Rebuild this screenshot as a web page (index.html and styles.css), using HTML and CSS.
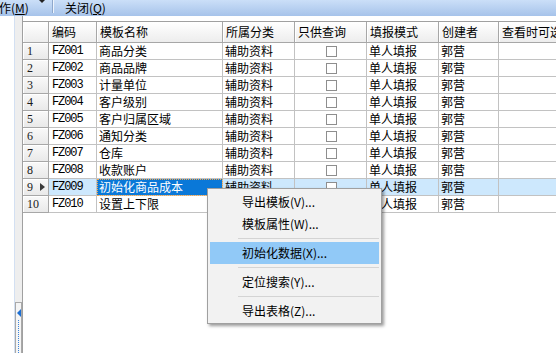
FILE: index.html
```html
<!DOCTYPE html>
<html lang="zh-CN">
<head>
<meta charset="utf-8">
<title>模板列表</title>
<link rel="stylesheet" href="styles.css">
</head>
<body>
<div class="screen">
  <div class="toolbar">
    <span class="tb-item tb-first">作(<u>M</u>)</span>
    <span class="tb-arrow"></span>
    <span class="tb-sep"></span>
    <span class="tb-item tb-second">关闭(<u>Q</u>)</span>
  </div>
  <div class="main">
    <div class="leftstrip">
      <div class="strip-white"></div>
      <div class="strip-bar">
        <div class="collapse-btn">
          <span class="cb-arrow"></span>
          <span class="cb-dots"></span>
        </div>
      </div>
    </div>
    <div class="gridpanel">
      <div class="grid">
        <div class="row">
          <div class="hc corner"></div>
          <div class="hc">编码</div>
          <div class="hc">模板名称</div>
          <div class="hc">所属分类</div>
          <div class="hc">只供查询</div>
          <div class="hc">填报模式</div>
          <div class="hc">创建者</div>
          <div class="hc">查看时可选</div>
        </div>
        <div class="row">
          <div class="rh"><span>1</span></div>
          <div class="c code">FZ001</div><div class="c">商品分类</div><div class="c">辅助资料</div>
          <div class="c ck"><span class="box"></span></div><div class="c">单人填报</div><div class="c">郭营</div><div class="c"></div>
        </div>
        <div class="row">
          <div class="rh"><span>2</span></div>
          <div class="c code">FZ002</div><div class="c">商品品牌</div><div class="c">辅助资料</div>
          <div class="c ck"><span class="box"></span></div><div class="c">单人填报</div><div class="c">郭营</div><div class="c"></div>
        </div>
        <div class="row">
          <div class="rh"><span>3</span></div>
          <div class="c code">FZ003</div><div class="c">计量单位</div><div class="c">辅助资料</div>
          <div class="c ck"><span class="box"></span></div><div class="c">单人填报</div><div class="c">郭营</div><div class="c"></div>
        </div>
        <div class="row">
          <div class="rh"><span>4</span></div>
          <div class="c code">FZ004</div><div class="c">客户级别</div><div class="c">辅助资料</div>
          <div class="c ck"><span class="box"></span></div><div class="c">单人填报</div><div class="c">郭营</div><div class="c"></div>
        </div>
        <div class="row">
          <div class="rh"><span>5</span></div>
          <div class="c code">FZ005</div><div class="c">客户归属区域</div><div class="c">辅助资料</div>
          <div class="c ck"><span class="box"></span></div><div class="c">单人填报</div><div class="c">郭营</div><div class="c"></div>
        </div>
        <div class="row">
          <div class="rh"><span>6</span></div>
          <div class="c code">FZ006</div><div class="c">通知分类</div><div class="c">辅助资料</div>
          <div class="c ck"><span class="box"></span></div><div class="c">单人填报</div><div class="c">郭营</div><div class="c"></div>
        </div>
        <div class="row">
          <div class="rh"><span>7</span></div>
          <div class="c code">FZ007</div><div class="c">仓库</div><div class="c">辅助资料</div>
          <div class="c ck"><span class="box"></span></div><div class="c">单人填报</div><div class="c">郭营</div><div class="c"></div>
        </div>
        <div class="row">
          <div class="rh"><span>8</span></div>
          <div class="c code">FZ008</div><div class="c">收款账户</div><div class="c">辅助资料</div>
          <div class="c ck"><span class="box"></span></div><div class="c">单人填报</div><div class="c">郭营</div><div class="c"></div>
        </div>
        <div class="row sel">
          <div class="rh"><span>9</span><span class="rh-arrow"></span></div>
          <div class="c code">FZ009</div><div class="c focus">初始化商品成本</div><div class="c">辅助资料</div>
          <div class="c ck"><span class="box"></span></div><div class="c">单人填报</div><div class="c">郭营</div><div class="c"></div>
        </div>
        <div class="row">
          <div class="rh"><span>10</span></div>
          <div class="c code">FZ010</div><div class="c">设置上下限</div><div class="c">辅助资料</div>
          <div class="c ck"><span class="box"></span></div><div class="c">单人填报</div><div class="c">郭营</div><div class="c"></div>
        </div>
      </div>
    </div>
  </div>
  <div class="menu">
    <div class="mi">导出模板(V)...</div>
    <div class="mi">模板属性(W)...</div>
    <div class="msep"></div>
    <div class="mi hl">初始化数据(X)...</div>
    <div class="msep"></div>
    <div class="mi">定位搜索(Y)...</div>
    <div class="msep"></div>
    <div class="mi">导出表格(Z)...</div>
  </div>
</div>
</body>
</html>
```

FILE: styles.css
```css
* { box-sizing: border-box; margin: 0; padding: 0; }
body {
  margin: 0;
  width: 556px;
  height: 353px;
  overflow: hidden;
  background: #fff;
  font: 12px "Noto Sans CJK SC", sans-serif;
  color: #000;
}
.screen { position: relative; width: 556px; height: 353px; overflow: hidden; }

/* toolbar */
.toolbar {
  height: 16px;
  background: linear-gradient(#cbdff8, #a6c3ea);
  display: flex;
  align-items: center;
}
.tb-item { line-height: 16px; white-space: nowrap; }
.tb-item u { text-decoration: underline; text-underline-offset: 1px; }
.tb-first { margin-left: -1px; }
.tb-arrow {
  align-self: flex-start;
  width: 0; height: 0;
  border-left: 3px solid transparent;
  border-right: 3px solid transparent;
  border-top: 3px solid #222;
  margin-left: 10px;
}
.tb-sep {
  align-self: flex-start;
  width: 2px;
  height: 13px;
  border-left: 1px solid #8ea8cc;
  border-right: 1px solid #eef4fc;
  margin-left: 7px;
}
.tb-second { margin-left: 11px; }

/* main area */
.main { display: flex; height: 337px; }
.leftstrip { width: 22px; display: flex; flex: none; }
.strip-white { width: 14px; background: #fff; }
.strip-bar {
  width: 8px;
  border-left: 1px solid #d3e0f2;
  background: #eeeeee;
  display: flex;
  flex-direction: column;
}
.collapse-btn {
  margin-top: auto;
  height: 51px;
  border: 1px solid #a9a9a9;
  border-bottom: none;
  background: #f5f5f5;
  display: flex;
  flex-direction: column;
  align-items: center;
  padding-top: 6px;
}
.cb-arrow {
  width: 0; height: 0;
  border-right: 4px solid #1d6fd3;
  border-top: 4px solid transparent;
  border-bottom: 4px solid transparent;
}
.cb-dots {
  margin-top: 3px;
  flex: 1;
  width: 0;
  border-left: 1px dotted #3b84dc;
}

.gridpanel {
  flex: 1;
  min-width: 0;
  border-left: 1px solid #a0a0a0;
  padding-top: 5px;
  overflow: hidden;
  background: #fff;
}
.grid {
  display: grid;
  grid-template-columns: 26px 48px 126px 72px 72px 72px 60px 80px;
  grid-template-rows: 21px repeat(10, 17px);
  border-top: 1px solid #a0a0a0;
  width: 556px;
}
.row { display: contents; }

.hc {
  background: linear-gradient(#ffffff, #ededed);
  border-right: 1px solid #a7a7a7;
  border-bottom: 1px solid #a7a7a7;
  box-shadow: inset 1px 0 #ffffff;
  padding-left: 3px;
  line-height: 20px;
  white-space: nowrap;
  overflow: hidden;
}
.rh {
  background: linear-gradient(#f9f9f9, #e9e9e9);
  border-right: 1px solid #a7a7a7;
  border-bottom: 1px solid #a7a7a7;
  box-shadow: inset 1px 1px #ffffff;
  font-family: "Liberation Serif", serif;
  font-size: 12px;
  color: #1a1a1a;
  padding-left: 4px;
  line-height: 16px;
  display: flex;
  justify-content: space-between;
  align-items: center;
}
.rh-arrow {
  width: 0; height: 0;
  border-left: 5px solid #3a3a3a;
  border-top: 4px solid transparent;
  border-bottom: 4px solid transparent;
  margin-right: 3px;
}
.c {
  border-right: 1px solid #c2c2c2;
  border-bottom: 1px solid #c2c2c2;
  padding-left: 2px;
  line-height: 16px;
  white-space: nowrap;
  overflow: hidden;
}
.code {
  font-family: "Liberation Mono", monospace;
  font-size: 12px;
  letter-spacing: -1.1px;
  padding-left: 3px;
}
.ck { display: flex; align-items: center; justify-content: center; padding-left: 1px; }
.box {
  width: 11px;
  height: 11px;
  border: 1px solid #8e8e8e;
  background: #fff;
}
.sel .c { background: #cde8fd; }
.sel .c.focus {
  background: #0a78d8;
  color: #fff;
  outline: 1px dotted #f0a850;
  outline-offset: -1px;
}

/* context menu */
.menu {
  position: absolute;
  left: 207px;
  top: 188px;
  width: 175px;
  background: #f2f2f2;
  border: 1px solid #a0a0a0;
  padding: 2px 2px 1px;
  box-shadow: 2px 2px 3px rgba(0, 0, 0, 0.4);
}
.mi {
  height: 22px;
  line-height: 22px;
  padding-left: 32px;
  white-space: nowrap;
  color: #000;
}
.mi.hl { background: #91c9f7; }
.msep {
  height: 7px;
  display: flex;
  align-items: center;
  padding-left: 28px;
}
.msep::after {
  content: "";
  flex: 1;
  height: 1px;
  background: #d4d4d4;
}
```
